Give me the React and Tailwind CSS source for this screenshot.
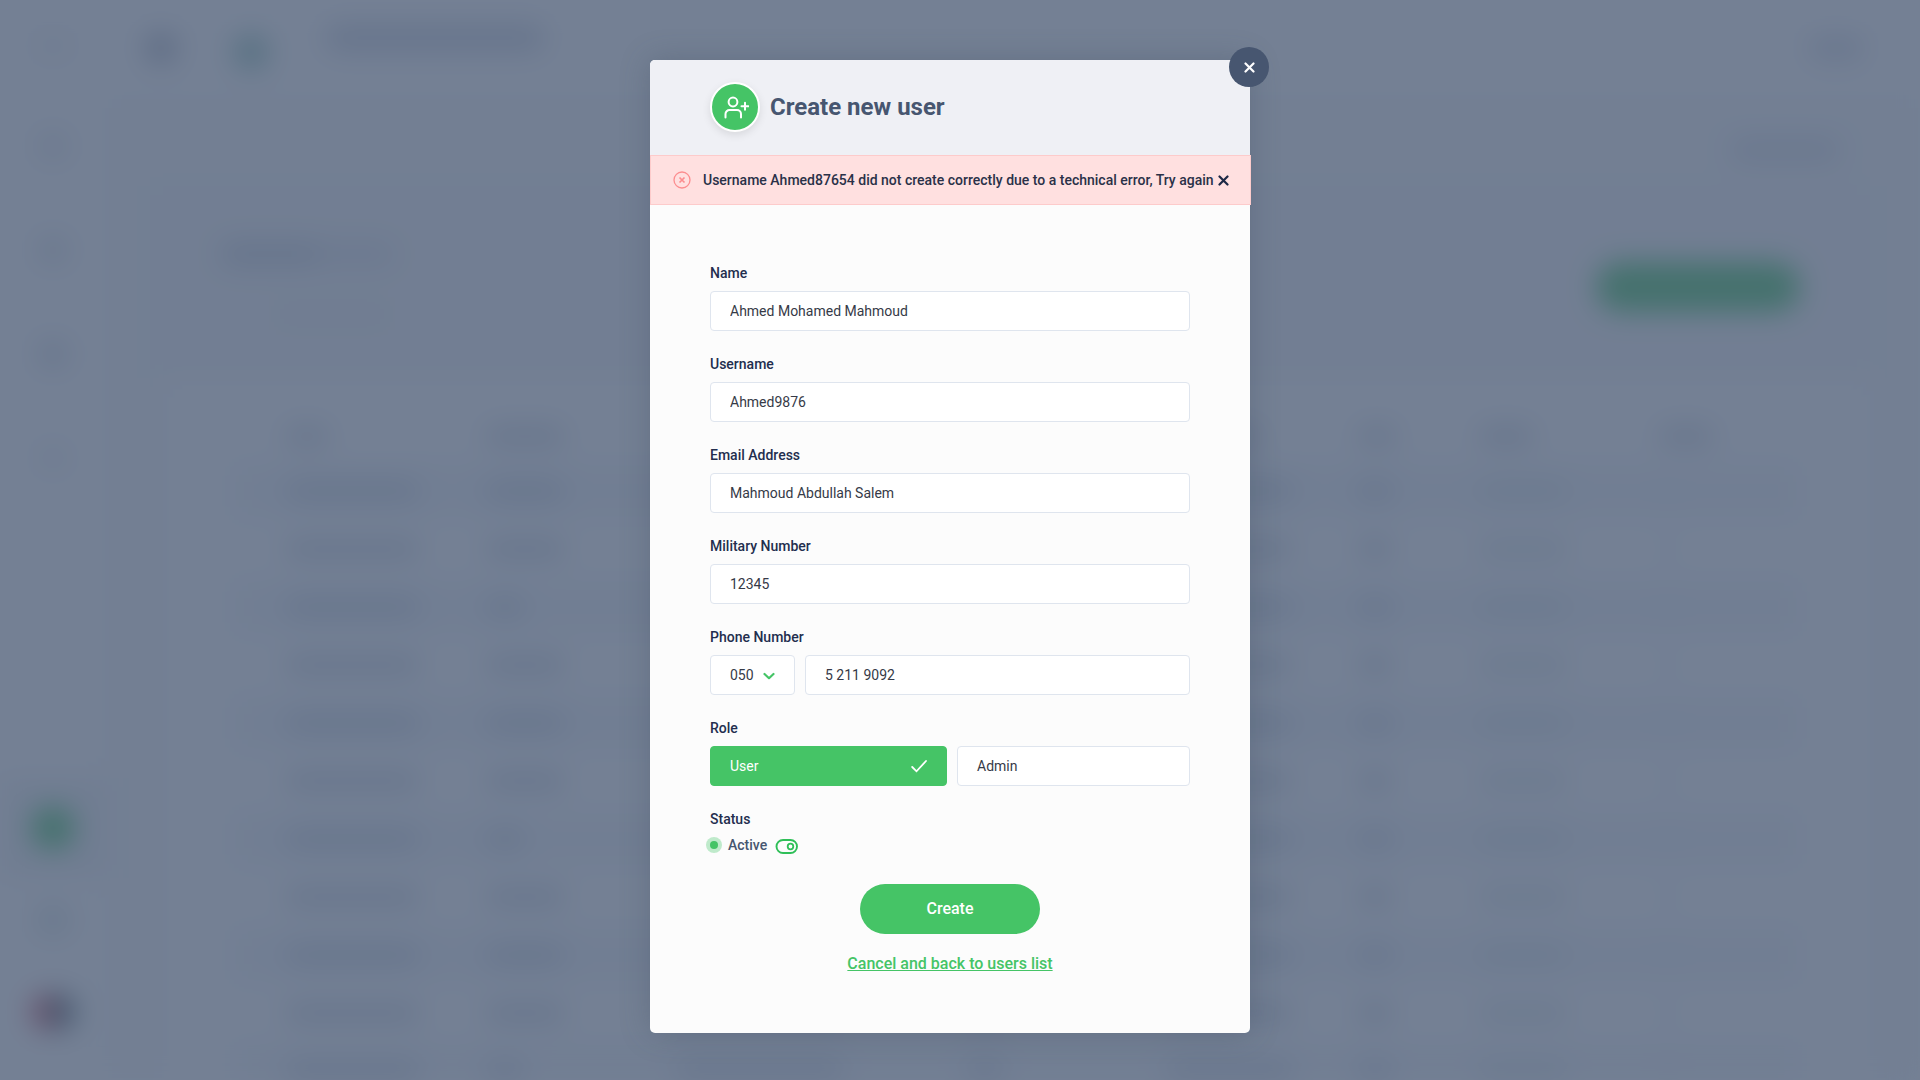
import { useState } from "react";

const fields = [
    { id: "name", label: "Name", value: "Ahmed Mohamed Mahmoud" },
    { id: "username", label: "Username", value: "Ahmed9876" },
    { id: "email", label: "Email Address", value: "Mahmoud Abdullah Salem" },
    { id: "military", label: "Military Number", value: "12345" },
];

// placeholder rows of the users table behind the modal
const rows = [0, 1, 2, 3, 4, 5, 6, 7, 8, 9, 10];

const labelStyle = "block text-sm leading-5 font-medium text-[#232e4e]";
const inputStyle = "h-10 w-full rounded border border-[#dfe5ee] bg-white px-[19px] text-sm text-[#363a47] outline-none";


function CloseIcon({ className })
{
    return (
        <svg className={className} viewBox="0 0 11 11" fill="none" stroke="currentColor" strokeWidth="2.2" strokeLinecap="round" aria-hidden="true">
            <path d="M1.500 1.500l8 8M9.500 1.500l-8 8" />
        </svg>
    );
}


function Backdrop()
{
    return (
        <div className="absolute inset-0 flex overflow-hidden bg-white blur-[14px]" aria-hidden="true">
            <div className="flex w-[105px] shrink-0 flex-col items-center pt-8">
                <div className="h-7 w-10 rounded-full bg-[#f1f2f5]"></div>
                <div className="mt-[70px] size-8 rounded-full bg-[#e2e5ea]"></div>
                <div className="mt-[72px] size-8 rounded-full bg-[#dce1e7]"></div>
                <div className="mt-[72px] size-8 rounded-full bg-[#d6dce4]"></div>
                <div className="mt-[72px] size-8 rounded-full bg-[#eceff4]"></div>
                <div className="mt-[304px] flex h-[100px] w-full items-center justify-center bg-[#eff2f4]">
                    <div className="size-11 rounded-full bg-[#45c466]"></div>
                </div>
                <div className="mt-6 size-9 rounded-full bg-[#dbe5e6]"></div>
                <div className="mt-14 flex h-9 w-11">
                    <div className="w-1/2 rounded-l-full bg-[#d04a60]"></div>
                    <div className="w-1/2 rounded-r-full bg-[#3e5c64]"></div>
                </div>
            </div>
            <div className="flex flex-1 flex-col">
                <div className="flex h-[95px] shrink-0 items-center pr-14">
                    <div className="ml-10 size-8 rounded-full bg-[#a9b0bf]"></div>
                    <div className="mt-2 ml-14 size-9 rounded-full bg-[#8fc3b8]"></div>
                    <div className="mb-5 ml-14 h-7 w-[220px] rounded-full bg-[#cdd3df]"></div>
                    <div className="ml-auto h-6 w-14 rounded-full bg-[#d5dae5]"></div>
                </div>
                <div className="flex flex-1 flex-col bg-[#f9fafb] pt-[43px]">
                    <div className="mr-20 ml-auto h-6 w-[110px] shrink-0 rounded-full bg-[#d9dee8]"></div>
                    <div className="mt-6 mr-[50px] ml-[45px] flex-1 bg-[#f6f7f9] pt-14">
                        <div className="flex justify-between pr-[70px] pl-[70px]">
                            <div>
                                <div className="flex">
                                    <div className="h-6 w-24 rounded-l-full bg-[#cbd2de]"></div>
                                    <div className="h-6 w-20 rounded-r-full bg-[#dfe3ec]"></div>
                                </div>
                                <div className="mt-10 ml-14 h-4 w-28 bg-[#eceef4]"></div>
                            </div>
                            <div className="mt-5 h-[50px] w-[204px] rounded-full bg-[#45c466]"></div>
                        </div>
                        <div className="mt-14 ml-3 bg-white px-[70px] pt-12 pb-40">
                            <div className="mb-4 grid h-5 grid-cols-[200px_190px_290px_200px_220px_125px_180px_100px] items-center pl-[53px]">
                                <div className="h-5 w-11 rounded-full bg-[#cfd5de]"></div>
                                <div className="h-5 w-20 rounded-full bg-[#cfd5de]"></div>
                                <div className="h-5 w-20 rounded-full bg-[#cfd5de]"></div>
                                <div className="h-5 w-10 rounded-full bg-[#cfd5de]"></div>
                                <div className="h-5 w-24 rounded-full bg-[#cfd5de]"></div>
                                <div className="-ml-7 h-5 w-10 rounded-full bg-[#cfd5de]"></div>
                                <div className="-ml-8 h-5 w-14 rounded-full bg-[#cfd5de]"></div>
                                <div className="-ml-8 h-5 w-14 rounded-full bg-[#cfd5de]"></div>
                            </div>
                            {rows.map((row) => (
                                <div key={row} className="grid h-[58px] grid-cols-[200px_190px_290px_200px_220px_125px_180px_100px] items-center rounded pl-[53px] odd:bg-white even:bg-[#f4f7fb]">
                                    <div className="h-5 w-[135px] rounded-full bg-[#cdd4de]"></div>
                                    <div className={row % 4 === 2 ? "h-5 w-10 rounded-full bg-[#cdd4de]" : "h-5 w-20 rounded-full bg-[#cdd4de]"}></div>
                                    <div className="h-5 w-[170px] rounded-full bg-[#cdd4de]"></div>
                                    <div className="h-5 w-10 rounded-full bg-[#cdd4de]"></div>
                                    <div className="h-5 w-32 rounded-full bg-[#cdd4de]"></div>
                                    <div className="-ml-7 h-5 w-9 rounded-full bg-[#cdd4de]"></div>
                                    <div className="-ml-8 h-5 w-[90px] rounded-full bg-[#dce5e8]"></div>
                                    <div className="-ml-8 h-4 w-5 rounded-full bg-[#eef1f6]"></div>
                                </div>
                            ))}
                        </div>
                    </div>
                </div>
            </div>
        </div>
    );
}


function App()
{
    const [values, setValues] = useState(Object.fromEntries(fields.map((f) => [f.id, f.value])));
    const [phone, setPhone] = useState("5 211 9092");
    const [role, setRole] = useState("user");
    const [active, setActive] = useState(true);
    const [showError, setShowError] = useState(true);

    return (
        <div className="relative min-h-screen overflow-hidden font-['Roboto',sans-serif]">
            <Backdrop />
            <div className="absolute inset-0 bg-[#465670]/75"></div>

            <div className="relative flex justify-center pt-[60px] pr-5">
                <div role="dialog" aria-labelledby="modalTitle" className="relative w-full max-w-[600px] rounded-[5px] bg-[#fcfcfc] shadow-[0_0_30px_rgba(60,72,92,0.3)]">
                    <button type="button" aria-label="Close" className="absolute -top-[13px] -right-[19px] flex size-10 items-center justify-center rounded-full bg-[#475670] text-white">
                        <CloseIcon className="size-[11px]" />
                    </button>

                    <header className="flex h-[95px] items-center gap-2.5 rounded-t-[5px] bg-[#eff0f5] px-[60px] pb-px">
                        <div className="flex size-[50px] items-center justify-center rounded-full border-2 border-white bg-[#45c466] shadow-[0_3px_8px_rgba(0,0,0,0.1)]">
                            <svg className="size-7" viewBox="0 0 28 28" fill="none" stroke="white" strokeWidth="2" strokeLinecap="round" aria-hidden="true">
                                <circle cx="12" cy="9" r="4.400" />
                                <path d="M4.500 24.500v-3.500a4 4 0 0 1 4-4h7.500a4 4 0 0 1 4 4v3.500" />
                                <path d="M24 9.800v7M20.500 13.300h7" />
                            </svg>
                        </div>
                        <h1 id="modalTitle" className="text-2xl font-bold text-[#475670]">Create new user</h1>
                    </header>

                    {showError &&
                        <div role="alert" className="-mr-px flex h-[50px] items-center border border-[#fdcbcb] bg-[#ffe0e0] pr-5 pl-[22px]">
                            <svg className="size-[18px] shrink-0" viewBox="0 0 18 18" fill="none" stroke="#fc8d8f" aria-hidden="true">
                                <circle cx="9" cy="9" r="8" strokeWidth="1.3" />
                                <path d="M6.500 6.500l5 5M11.500 6.500l-5 5" strokeWidth="1.7" />
                            </svg>
                            <p className="ml-3 text-sm font-medium text-[#2a3148]">Username Ahmed87654 did not create correctly due to a technical error, Try again</p>
                            <button type="button" aria-label="Dismiss" className="ml-auto p-px text-[#1d2845]" onClick={() => setShowError(false)}>
                                <CloseIcon className="size-[11px]" />
                            </button>
                        </div>
                    }

                    <form className="px-[60px] pt-[58px] pb-[57px]" onSubmit={(e) => e.preventDefault()}>
                        <div className="flex flex-col gap-[23px]">
                            {fields.map((f) => (
                                <div key={f.id} className="flex flex-col gap-2">
                                    <label htmlFor={f.id} className={labelStyle}>{f.label}</label>
                                    <input id={f.id} type="text" className={inputStyle} value={values[f.id]} onChange={(e) => setValues({ ...values, [f.id]: e.target.value })} />
                                </div>
                            ))}

                            <div className="flex flex-col gap-2">
                                <label htmlFor="phone" className={labelStyle}>Phone Number</label>
                                <div className="flex gap-2.5">
                                    <div className="relative w-[85px] shrink-0">
                                        <select aria-label="Phone prefix" className={`${inputStyle} appearance-none`} defaultValue="050">
                                            <option>050</option>
                                            <option>055</option>
                                        </select>
                                        <svg className="pointer-events-none absolute top-[17px] right-5 h-2 w-3" viewBox="0 0 12 8" fill="none" stroke="#45c466" strokeWidth="2.2" strokeLinecap="round" strokeLinejoin="round" aria-hidden="true">
                                            <path d="M1.500 2L6 6.200 10.500 2" />
                                        </svg>
                                    </div>
                                    <input id="phone" type="text" className={inputStyle} value={phone} onChange={(e) => setPhone(e.target.value)} />
                                </div>
                            </div>

                            <fieldset>
                                <legend className={`${labelStyle} mb-2`}>Role</legend>
                                <div className="flex gap-2.5 text-sm">
                                    {["user", "admin"].map((r) => (
                                        <label key={r} className={role === r
                                            ? "relative flex h-10 w-[237px] items-center justify-between rounded border border-[#45c466] bg-[#45c466] px-[19px] text-white"
                                            : "relative flex h-10 flex-1 items-center rounded border border-[#dfe5ee] bg-white px-[19px] text-[#363a47]"}>
                                            <input type="radio" name="role" className="sr-only" checked={role === r} onChange={() => setRole(r)} />
                                            {r === "user" ? "User" : "Admin"}
                                            {role === r &&
                                                <svg className="h-3.5 w-4" viewBox="0 0 16 14" fill="none" stroke="white" strokeWidth="1.800" strokeLinecap="round" aria-hidden="true">
                                                    <path d="M1.200 8l4.300 4.300L15 2" />
                                                </svg>
                                            }
                                        </label>
                                    ))}
                                </div>
                            </fieldset>
                        </div>

                        <div className="mt-[23px]">
                            <p className={labelStyle}>Status</p>
                            <label className="relative mt-1.5 -ml-1 flex w-fit items-center gap-1.5 text-sm font-medium text-[#475670]">
                                <input type="checkbox" className="sr-only" checked={active} onChange={() => setActive(!active)} />
                                <span className="flex size-4 items-center justify-center rounded-full bg-[#bfeacb]">
                                    <span className="size-2 rounded-full bg-[#45c466]"></span>
                                </span>
                                {active ? "Active" : "Inactive"}
                                <svg className="mt-0.5 ml-0.5 h-[15px] w-[23px]" viewBox="0 0 23 15" fill="none" stroke="#2fbf58" aria-hidden="true">
                                    <rect x="1.500" y="1" width="20.500" height="13" rx="6.500" strokeWidth="1.900" />
                                    <circle cx={active ? "15.500" : "8"} cy="7.500" r="2.800" strokeWidth="1.800" />
                                </svg>
                            </label>
                        </div>

                        <div className="mt-[29px] flex flex-col items-center gap-[18px]">
                            <button type="submit" className="h-[50px] w-[180px] rounded-full bg-[#45c466] font-medium text-white">Create</button>
                            <a href="#users" className="font-medium text-[#45c466] underline">Cancel and back to users list</a>
                        </div>
                    </form>
                </div>
            </div>
        </div>
    );
}


export default App;
